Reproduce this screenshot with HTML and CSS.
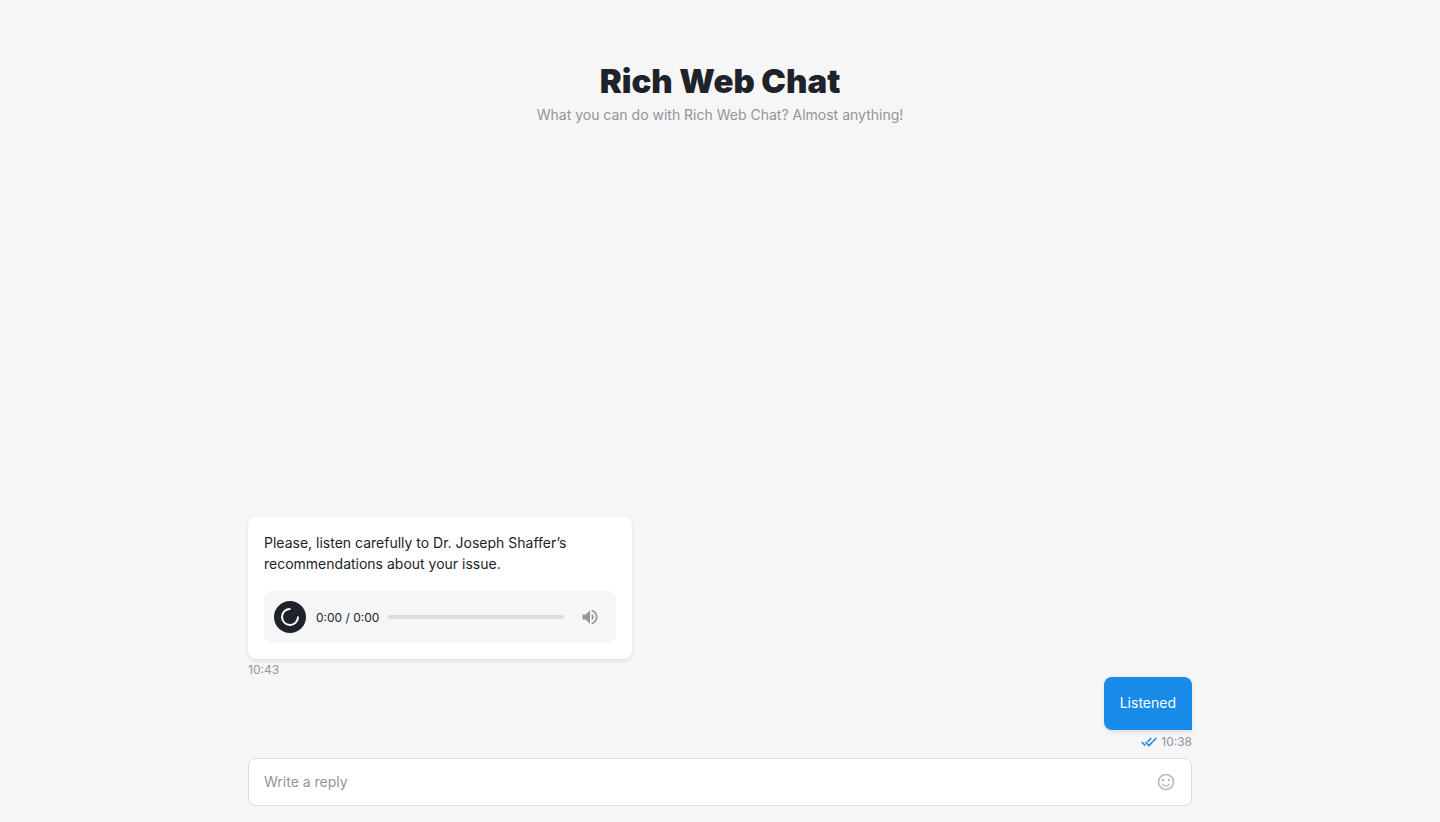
FILE: index.html
```html
<!DOCTYPE html>
<html lang="en">
<head>
    <meta charset="UTF-8">
    <meta name="viewport" content="width=device-width, initial-scale=1.0">
    <title>Rich Web Chat</title>
    <link rel="stylesheet" href="styles.css">
</head>
<body>
    <div class="page">
        <header class="header">
            <h1>Rich Web Chat</h1>
            <p>What you can do with Rich Web Chat? Almost anything!</p>
        </header>

        <main class="chat">
            <!-- incoming message -->
            <div class="message">
                <div class="bubble card">
                    <p class="text">Please, listen carefully to Dr. Joseph Shaffer’s recommendations about your issue.</p>
                    <div class="player">
                        <button class="play" type="button" aria-label="Play">
                            <svg width="20" height="20" viewBox="0 0 20 20" fill="none" stroke="#fff" stroke-width="2">
                                <path d="M10.500 2A8 8 0 1 0 18 9.500"/>
                            </svg>
                        </button>
                        <span class="duration">0:00 / 0:00</span>
                        <div class="track"></div>
                        <button class="icon-btn" type="button" aria-label="Volume">
                            <svg width="20" height="20" viewBox="0 0 24 24" fill="#90959d">
                                <path d="M3 9v6h4l5 5V4L7 9H3zm13.500 3A4.500 4.500 0 0 0 14 7.970v8.050A4.500 4.500 0 0 0 16.500 12zM14 3.230v2.060c2.890.860 5 3.540 5 6.710s-2.110 5.850-5 6.710v2.060c4.010-.910 7-4.490 7-8.770s-2.990-7.860-7-8.770z"/>
                            </svg>
                        </button>
                    </div>
                </div>
                <div class="meta">10:43</div>
            </div>

            <!-- outgoing message -->
            <div class="message out">
                <div class="bubble">
                    <p class="text">Listened</p>
                </div>
                <div class="meta">
                    <svg width="16" height="10" viewBox="0 0 16 10" fill="none" stroke="#188ae8" stroke-width="1.500">
                        <path d="M.7 5l3.600 3.600M10.300 1L6.600 5M4.400 5L8 8.600 15.300 1"/>
                    </svg>
                    10:38
                </div>
            </div>
        </main>

        <form class="reply">
            <input type="text" placeholder="Write a reply" aria-label="Write a reply">
            <button class="icon-btn" type="button" aria-label="Emoji">
                <svg width="20" height="20" viewBox="0 0 24 24" fill="#bcbcbc">
                    <path d="M12 2a10 10 0 1 0 0 20 10 10 0 0 0 0-20zm0 18a8 8 0 1 1 0-16 8 8 0 0 1 0 16z"/>
                    <circle cx="8.500" cy="9.500" r="1.500"/>
                    <circle cx="15.500" cy="9.500" r="1.500"/>
                    <path d="M12 17.500c2.330 0 4.300-1.460 5.100-3.500h-1.700a3.900 3.900 0 0 1-6.800 0H6.900c.8 2.040 2.770 3.500 5.100 3.500z"/>
                </svg>
            </button>
        </form>
    </div>
</body>
</html>
```

FILE: styles.css
```css
* {
    box-sizing: border-box;
}
body {
    margin: 0;
    background: #f6f6f6;
    color: #1e222b;
    font-family: Inter, "Liberation Sans", sans-serif;
    font-size: 14px;
    line-height: 21px;
}
h1, p {
    margin: 0;
}
.page {
    display: flex;
    flex-direction: column;
    min-height: 100vh;
    max-width: 976px;
    margin: 0 auto;
    padding: 60px 16px 16px;
}
.header {
    text-align: center;
}
.header h1 {
    font-size: 33px;
    line-height: 42px;
    font-weight: 900;
}
.header p {
    margin-top: 2px;
    color: #90959d;
}
.chat {
    flex: 1;
    display: flex;
    flex-direction: column;
    justify-content: flex-end;
}
.message {
    display: flex;
    flex-direction: column;
    align-items: flex-start;
}
.bubble {
    padding: 15px 16px 17px;
    border-radius: 8px;
    box-shadow: 0 2px 4px rgba(0, 0, 0, 0.1);
}
.card {
    width: 384px;
    max-width: 100%;
    padding-bottom: 16px;
    background: #fff;
}
.out {
    align-items: flex-end;
}
.out .bubble {
    background: #188ae8;
    color: #fff;
    border-bottom-right-radius: 0;
}
.meta {
    display: flex;
    align-items: center;
    gap: 4px;
    padding-top: 3px;
    color: #90959d;
    font-size: 12px;
    line-height: 15px;
}
.out .meta {
    padding: 4px 0 9px;
}
.player {
    display: flex;
    align-items: center;
    height: 52px;
    margin-top: 17px;
    padding: 0 16px 0 10px;
    border-radius: 8px;
    background: #f6f6f6;
}
.play {
    display: flex;
    align-items: center;
    justify-content: center;
    width: 32px;
    height: 32px;
    padding: 0;
    border: none;
    border-radius: 50%;
    background: #1e222b;
    cursor: pointer;
}
.duration {
    margin: 0 8px 0 10px;
    font-size: 12px;
}
.track {
    flex: 1;
    height: 4px;
    margin-right: 16px;
    border-radius: 2px;
    background: #dedede;
}
.icon-btn {
    display: flex;
    padding: 0;
    border: none;
    background: none;
    cursor: pointer;
}
.reply {
    display: flex;
    align-items: center;
    height: 48px;
    padding: 0 15px;
    border: 1px solid #dedede;
    border-radius: 8px;
    background: #fff;
}
.reply input {
    flex: 1;
    min-width: 0;
    padding: 0 0 2px;
    border: none;
    outline: none;
    background: none;
    color: inherit;
    font: inherit;
}
.reply input::placeholder {
    color: #90959d;
}
```
